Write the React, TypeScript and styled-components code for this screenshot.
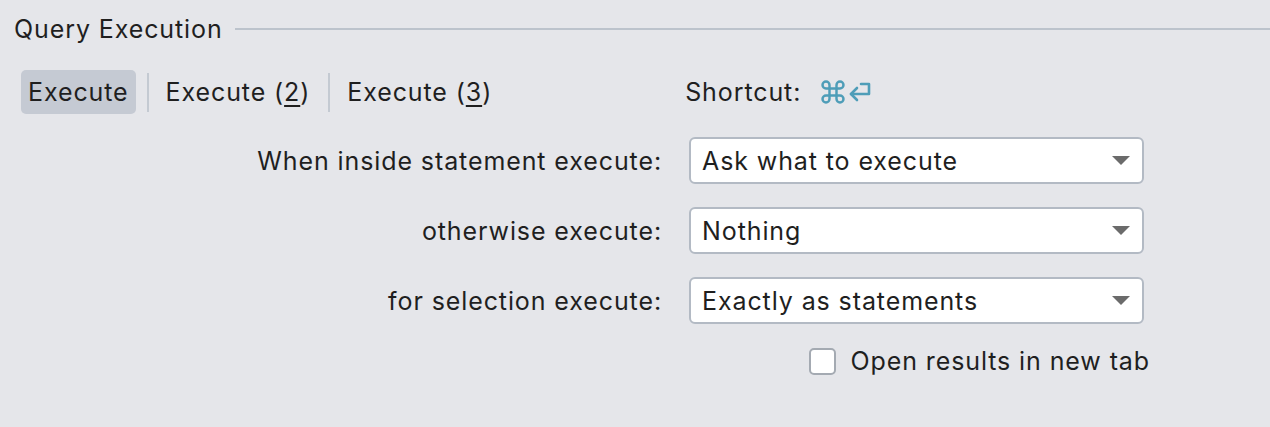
import React from "react";
import styled, { createGlobalStyle } from "styled-components";

const Global = createGlobalStyle`
  html, body { margin: 0; padding: 0; background: #e5e6ea; }
  body { font-family: Inter, "Open Sans", sans-serif; color: #1f1f1f; -webkit-font-smoothing: antialiased; }
`;

const Page = styled.div`
  width: 1270px;
  height: 427px;
  box-sizing: border-box;
  padding: 12px 0 0 14px;
  background: #e5e6ea;
  font-size: 25px;
  letter-spacing: 0.9px;
`;

const TitleRow = styled.div`
  display: flex;
  align-items: center;
  gap: 12px;
  height: 34px;
`;

const Title = styled.span`
  white-space: nowrap;
`;

const Rule = styled.div`
  flex: 1;
  height: 2px;
  background: #bcc3cc;
`;

const TabRow = styled.div`
  display: flex;
  align-items: center;
  margin: 24px 0 0 7px;
  height: 44px;
`;

const Tab = styled.div<{ $active?: boolean }>`
  height: 44px;
  box-sizing: border-box;
  padding: 0 7px;
  display: flex;
  align-items: center;
  border-radius: 5px;
  background: ${(p) => (p.$active ? "#c5cad3" : "transparent")};
  white-space: nowrap;
`;

const Sep = styled.div`
  width: 2px;
  height: 39px;
  margin: 0 10px 0 11px;
  background: #c4cad2;
`;

const Mnemonic = styled.span`
  text-decoration: underline;
  text-underline-offset: 4px;
  text-decoration-thickness: 2px;
`;

const Shortcut = styled.div`
  display: flex;
  align-items: center;
  margin-left: 186px;
  gap: 18px;
`;

const Keys = styled.div`
  display: flex;
  align-items: center;
  gap: 0px;
  color: #4e9db8;
`;

const Form = styled.div`
  display: grid;
  grid-template-columns: 648px 455px;
  column-gap: 27px;
  row-gap: 23px;
  margin-top: 23px;
  align-items: center;
`;

const Label = styled.label`
  justify-self: end;
  white-space: nowrap;
`;

const Combo = styled.div`
  height: 47px;
  box-sizing: border-box;
  border: 2px solid #b3bac4;
  border-radius: 6px;
  background: #ffffff;
  display: flex;
  align-items: center;
  justify-content: space-between;
  padding: 0 12px 0 11px;
`;

const Arrow = styled.div`
  width: 0;
  height: 0;
  border-left: 9px solid transparent;
  border-right: 9px solid transparent;
  border-top: 9px solid #6b6b6b;
`;

const CheckRow = styled.div`
  grid-column: 2;
  justify-self: end;
  display: flex;
  align-items: center;
  gap: 14px;
  margin-right: -6px;
  margin-top: -1px;
`;

const Box = styled.div`
  width: 27px;
  height: 27px;
  box-sizing: border-box;
  border: 2px solid #a4aab2;
  border-radius: 5px;
  background: #ffffff;
`;

const Spacer = styled.div``;

function ReturnIcon() {
  return (
    <svg width="26" height="24" viewBox="0 0 26 24" fill="none" stroke="currentColor" strokeWidth="2.6" strokeLinecap="round" strokeLinejoin="round">
      <path d="M14 4 H22 V14 H4" />
      <path d="M10 8 L4 14 L10 20" />
    </svg>
  );
}

function CommandIcon() {
  return (
    <svg width="28" height="28" viewBox="0 0 24 24" fill="none" stroke="currentColor" strokeWidth="2.1" strokeLinecap="round" strokeLinejoin="round">
      <path d="M15 6v12a3 3 0 1 0 3-3H6a3 3 0 1 0 3 3V6a3 3 0 1 0-3 3h12a3 3 0 1 0-3-3" />
    </svg>
  );
}

const rows = [
  { label: "When inside statement execute:", value: "Ask what to execute" },
  { label: "otherwise execute:", value: "Nothing" },
  { label: "for selection execute:", value: "Exactly as statements" },
];

export default function App() {
  return (
    <Page>
      <Global />
      <TitleRow>
        <Title>Query Execution</Title>
        <Rule />
      </TitleRow>
      <TabRow>
        <Tab $active>Execute</Tab>
        <Sep />
        <Tab>
          Execute (<Mnemonic>2</Mnemonic>)
        </Tab>
        <Sep />
        <Tab>
          Execute (<Mnemonic>3</Mnemonic>)
        </Tab>
        <Shortcut>
          <span>Shortcut:</span>
          <Keys>
            <CommandIcon />
            <ReturnIcon />
          </Keys>
        </Shortcut>
      </TabRow>
      <Form>
        {rows.map((r) => (
          <React.Fragment key={r.label}>
            <Label>{r.label}</Label>
            <Combo>
              <span>{r.value}</span>
              <Arrow />
            </Combo>
          </React.Fragment>
        ))}
        <Spacer />
        <CheckRow>
          <Box />
          <span>Open results in new tab</span>
        </CheckRow>
      </Form>
    </Page>
  );
}
